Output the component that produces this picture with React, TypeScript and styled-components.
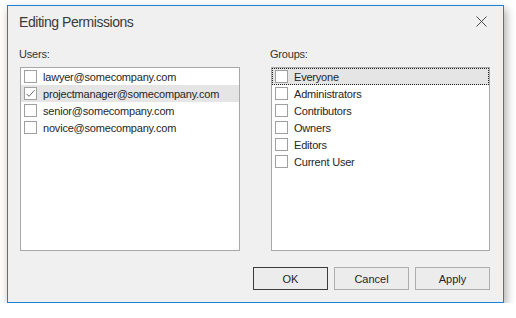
import React, { useState } from 'react';
import styled, { createGlobalStyle } from 'styled-components';

const GlobalStyle = createGlobalStyle`
  html, body {
    margin: 0;
    padding: 0;
    background: #ffffff;
  }
  body {
    font-family: 'Liberation Sans', Arial, sans-serif;
    font-size: 11px;
    color: #202020;
  }
`;

const Window = styled.div`
  box-sizing: border-box;
  margin: 5px 0 0 7px;
  width: 497px;
  height: 298px;
  border: 1px solid #1883d7;
  background: #f0f0f0;
  box-shadow: 2px 4px 9px rgba(0, 0, 0, 0.35);
  display: flex;
  flex-direction: column;
`;

const TitleBar = styled.div`
  height: 30px;
  display: flex;
  align-items: center;
  justify-content: space-between;
  padding: 0 12px 0 11px;
`;

const Title = styled.div`
  font-size: 14px;
  letter-spacing: -0.45px;
  color: #3a3a3a;
  padding-top: 1px;
`;

const CloseButton = styled.button`
  width: 20px;
  height: 20px;
  border: none;
  background: transparent;
  padding: 0;
  display: flex;
  align-items: center;
  justify-content: center;
  cursor: pointer;
`;

const Body = styled.div`
  flex: 1;
  display: flex;
  flex-direction: column;
  padding: 11px 13px 12px 12px;
`;

const Columns = styled.div`
  display: grid;
  grid-template-columns: 220px 219px;
  column-gap: 31px;
`;

const Column = styled.div`
  display: flex;
  flex-direction: column;
`;

const Label = styled.div`
  height: 15px;
  line-height: 15px;
  margin: 0 0 5px -1px;
  color: #333333;
  letter-spacing: -0.2px;
`;

const List = styled.div`
  box-sizing: border-box;
  height: 184px;
  border: 1px solid #a8a8a8;
  background: #ffffff;
  display: flex;
  flex-direction: column;
`;

const Row = styled.div<{ $selected?: boolean; $focused?: boolean }>`
  box-sizing: border-box;
  height: 17px;
  display: flex;
  align-items: center;
  padding-left: 3px;
  gap: 6px;
  background: ${(p) => (p.$selected ? '#e5e5e5' : 'transparent')};
  outline: ${(p) => (p.$focused ? '1px dotted #202020' : 'none')};
  outline-offset: -1px;
  cursor: default;
`;

const Box = styled.span`
  box-sizing: border-box;
  width: 13px;
  height: 13px;
  border: 1px solid #a0a0a0;
  background: #ffffff;
  display: flex;
  align-items: center;
  justify-content: center;
  flex: none;
`;

const RowText = styled.span`
  color: #262626;
  letter-spacing: -0.2px;
  white-space: nowrap;
`;

const Footer = styled.div`
  margin-top: 16px;
  display: flex;
  justify-content: flex-end;
  gap: 6px;
`;

const Button = styled.button<{ $default?: boolean }>`
  box-sizing: border-box;
  width: 75px;
  height: 23px;
  background: #ececec;
  border: 1px solid ${(p) => (p.$default ? '#3c3c3c' : '#adadad')};
  font-family: 'Liberation Sans', Arial, sans-serif;
  font-size: 11px;
  color: #262626;
  padding: 0;
  cursor: pointer;
`;

const Check = () => (
  <svg width="11" height="11" viewBox="0 0 11 11">
    <path d="M1.5 5.8 L4 8.3 L9.5 2.2" fill="none" stroke="#6a6a6a" strokeWidth="1" />
  </svg>
);

const users = [
  'lawyer@somecompany.com',
  'projectmanager@somecompany.com',
  'senior@somecompany.com',
  'novice@somecompany.com',
];

const groups = ['Everyone', 'Administrators', 'Contributors', 'Owners', 'Editors', 'Current User'];

export default function App() {
  const [userChecks, setUserChecks] = useState<boolean[]>([false, true, false, false]);
  const [groupChecks, setGroupChecks] = useState<boolean[]>(groups.map(() => false));

  const toggle = (list: boolean[], set: (v: boolean[]) => void, i: number) =>
    set(list.map((v, j) => (j === i ? !v : v)));

  return (
    <>
      <GlobalStyle />
      <Window>
        <TitleBar>
          <Title>Editing Permissions</Title>
          <CloseButton aria-label="Close">
            <svg width="11" height="11" viewBox="0 0 11 11">
              <path d="M0.5 0.5 L10.5 10.5 M10.5 0.5 L0.5 10.5" stroke="#4a4a4a" strokeWidth="1" />
            </svg>
          </CloseButton>
        </TitleBar>
        <Body>
          <Columns>
            <Column>
              <Label>Users:</Label>
              <List>
                {users.map((u, i) => (
                  <Row key={u} $selected={i === 1} onClick={() => toggle(userChecks, setUserChecks, i)}>
                    <Box>{userChecks[i] && <Check />}</Box>
                    <RowText>{u}</RowText>
                  </Row>
                ))}
              </List>
            </Column>
            <Column>
              <Label>Groups:</Label>
              <List>
                {groups.map((g, i) => (
                  <Row
                    key={g}
                    $selected={i === 0}
                    $focused={i === 0}
                    onClick={() => toggle(groupChecks, setGroupChecks, i)}
                  >
                    <Box>{groupChecks[i] && <Check />}</Box>
                    <RowText>{g}</RowText>
                  </Row>
                ))}
              </List>
            </Column>
          </Columns>
          <Footer>
            <Button $default>OK</Button>
            <Button>Cancel</Button>
            <Button>Apply</Button>
          </Footer>
        </Body>
      </Window>
    </>
  );
}
